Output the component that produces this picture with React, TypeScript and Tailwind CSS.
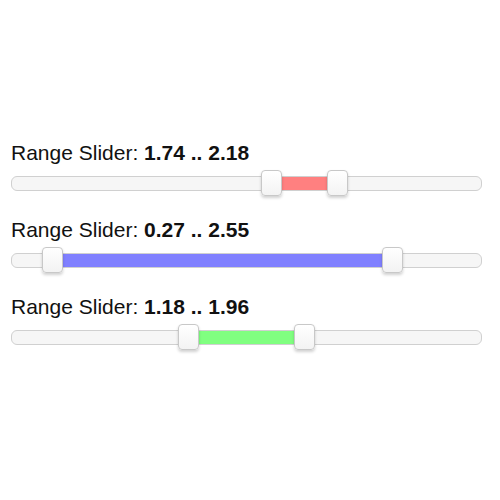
const MAX = Math.PI;

const SLIDERS = [
  { lo: 1.74, hi: 2.18, fill: "bg-[#ff8080]" },
  { lo: 0.27, hi: 2.55, fill: "bg-[#8080ff]" },
  { lo: 1.18, hi: 1.96, fill: "bg-[#80ff80]" },
];

function Handle({ value }: { value: number }) {
  return (
    <span
      className="absolute top-[-7px] h-[26px] w-[21px] -ml-[10.5px] rounded-[4px] border border-[#c8c8c8] bg-gradient-to-b from-white to-[#f3f3f3] shadow-[0_2px_3px_rgba(0,0,0,0.18)]"
      style={{ left: `${(value / MAX) * 100}%` }}
    />
  );
}

function RangeSlider({ lo, hi, fill }: { lo: number; hi: number; fill: string }) {
  const a = (lo / MAX) * 100;
  const b = (hi / MAX) * 100;
  return (
    <div>
      <div className="text-[21px] leading-[24px] text-[#111]">
        Range Slider: <b className="font-bold">{lo.toFixed(2)} .. {hi.toFixed(2)}</b>
      </div>
      <div className="relative mt-[11px] h-[15px] rounded-[6px] border border-[#d0d0d0] bg-[#f6f6f6]">
        <div className={`absolute top-0 bottom-0 ${fill}`} style={{ left: `${a}%`, width: `${b - a}%` }} />
        <Handle value={lo} />
        <Handle value={hi} />
      </div>
    </div>
  );
}

export default function App() {
  return (
    <div
      className="w-[500px] h-[500px] bg-white pt-[141px] pl-[11px] pr-[18px] flex flex-col gap-[27px]"
      style={{ fontFamily: '"Liberation Sans", Arial, sans-serif' }}
    >
      {SLIDERS.map((s, i) => (
        <RangeSlider key={i} {...s} />
      ))}
    </div>
  );
}
